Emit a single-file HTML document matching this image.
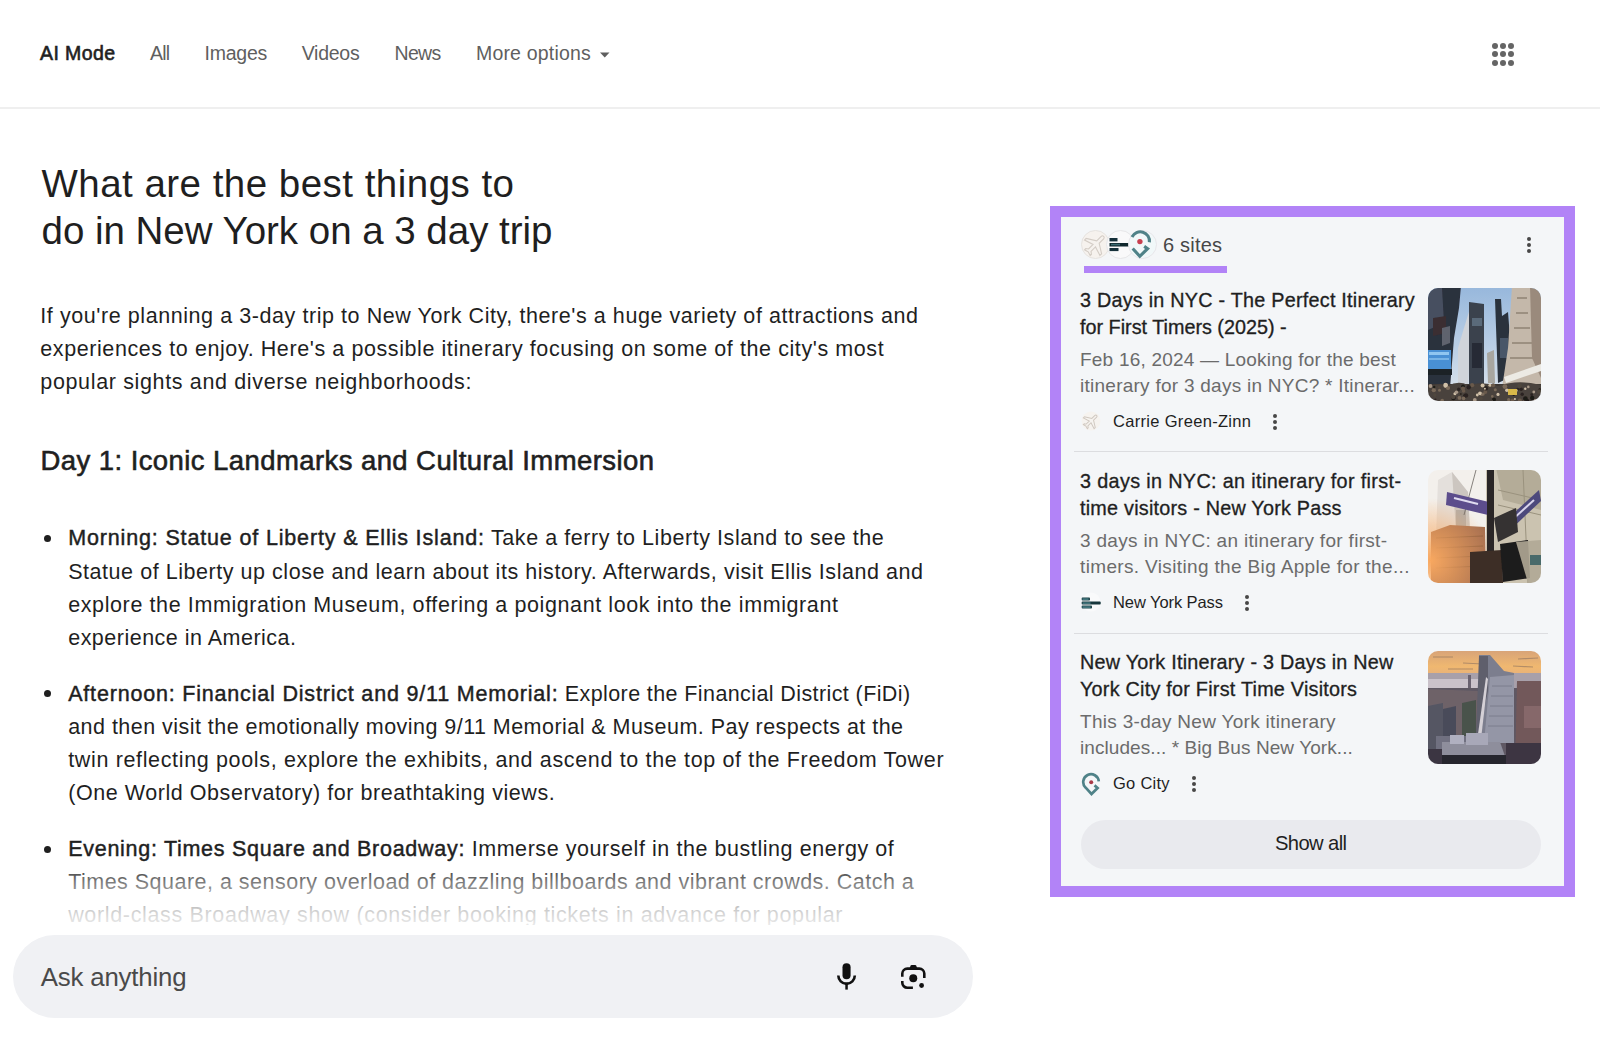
<!DOCTYPE html>
<html><head><meta charset="utf-8">
<style>
html,body{margin:0;padding:0;background:#fff;width:1600px;height:1049px;overflow:hidden;position:relative;font-family:"Liberation Sans",sans-serif;}
.ln{position:absolute;white-space:nowrap;line-height:1;}
.md{font-weight:normal;-webkit-text-stroke:0.45px currentColor;}
.tt .md{-webkit-text-stroke:0.32px currentColor;}
.hd .md{-webkit-text-stroke:0.6px currentColor;}
.abs{position:absolute;}
#sep{left:0;top:106.5px;width:1600px;height:2px;background:#efefef;}
.dot{position:absolute;width:6px;height:6px;border-radius:50%;background:#656565;}
.bul{position:absolute;width:7px;height:7px;border-radius:50%;background:#1f1f1f;}
#panel{box-sizing:border-box;left:1050px;top:205.5px;width:524.8px;height:691px;border:11px solid #b283f7;background:#f4f6f8;}
.div{position:absolute;left:1074px;width:474px;height:1px;background:#dcdde0;}
.thumb{position:absolute;left:1428px;width:113px;height:113px;border-radius:10px;overflow:hidden;z-index:3;}
#show{left:1080.5px;top:819.5px;width:460.5px;height:49px;border-radius:25px;background:#e9eaee;}
#search{z-index:2;left:13px;top:935px;width:960px;height:83px;border-radius:42px;background:#f0f1f4;}
#fade{z-index:1;left:0;top:835px;width:1000px;height:100px;background:linear-gradient(to bottom,rgba(255,255,255,0) 0px,rgba(255,255,255,0) 27px,rgba(255,255,255,0.42) 47px,rgba(255,255,255,0.8) 77px,rgba(255,255,255,0.9) 90px);}
.kb{position:absolute;width:4px;height:4px;border-radius:50%;background:#474747;}
.fav{position:absolute;border-radius:50%;overflow:hidden;}
</style></head><body>
<div class="abs" id="sep"></div>
<!-- grid icon -->
<div class="dot" style="left:1491.5px;top:43px"></div><div class="dot" style="left:1499.5px;top:43px"></div><div class="dot" style="left:1508px;top:43px"></div>
<div class="dot" style="left:1491.5px;top:51px"></div><div class="dot" style="left:1499.5px;top:51px"></div><div class="dot" style="left:1508px;top:51px"></div>
<div class="dot" style="left:1491.5px;top:59.5px"></div><div class="dot" style="left:1499.5px;top:59.5px"></div><div class="dot" style="left:1508px;top:59.5px"></div>
<!-- dropdown arrow -->
<svg class="abs" style="left:599px;top:51px" width="12" height="8"><path d="M1 1.5 L10.5 1.5 L5.75 6.5 Z" fill="#5f5f5f"/></svg>

<!-- bullets -->
<div class="bul" style="left:43.8px;top:534.6px"></div>
<div class="bul" style="left:43.8px;top:690.4px"></div>
<div class="bul" style="left:43.8px;top:846.3px"></div>

<div class="ln hd" id="t_nav0" style="z-index:0;left:40.00px;top:43.69px;font-size:19.50px;color:#1f1f1f;letter-spacing:0.394px"><span class="in"><span class="md" style="letter-spacing:0.394px">AI Mode</span></span></div>
<div class="ln" id="t_nav1" style="z-index:0;left:150.00px;top:43.69px;font-size:19.50px;color:#5f5f5f;letter-spacing:-0.843px"><span class="in">All</span></div>
<div class="ln" id="t_nav2" style="z-index:0;left:204.50px;top:43.69px;font-size:19.50px;color:#5f5f5f;letter-spacing:-0.232px"><span class="in">Images</span></div>
<div class="ln" id="t_nav3" style="z-index:0;left:301.70px;top:43.69px;font-size:19.50px;color:#5f5f5f;letter-spacing:-0.255px"><span class="in">Videos</span></div>
<div class="ln" id="t_nav4" style="z-index:0;left:394.50px;top:43.69px;font-size:19.50px;color:#5f5f5f;letter-spacing:-0.656px"><span class="in">News</span></div>
<div class="ln" id="t_nav5" style="z-index:0;left:476.00px;top:43.69px;font-size:19.50px;color:#5f5f5f;letter-spacing:0.179px"><span class="in">More options</span></div>
<div class="ln" id="t_h1" style="z-index:0;left:41.50px;top:164.91px;font-size:38.50px;color:#1f1f1f;letter-spacing:0.476px"><span class="in">What are the best things to</span></div>
<div class="ln" id="t_h2" style="z-index:0;left:41.50px;top:211.61px;font-size:38.50px;color:#1f1f1f;letter-spacing:-0.018px"><span class="in">do in New York on a 3 day trip</span></div>
<div class="ln" id="t_p0" style="z-index:0;left:40.30px;top:305.60px;font-size:21.50px;color:#1f1f1f;letter-spacing:0.569px"><span class="in">If you're planning a 3-day trip to New York City, there's a huge variety of attractions and</span></div>
<div class="ln" id="t_p1" style="z-index:0;left:40.30px;top:338.90px;font-size:21.50px;color:#1f1f1f;letter-spacing:0.586px"><span class="in">experiences to enjoy. Here's a possible itinerary focusing on some of the city's most</span></div>
<div class="ln" id="t_p2" style="z-index:0;left:40.30px;top:372.20px;font-size:21.50px;color:#1f1f1f;letter-spacing:0.647px"><span class="in">popular sights and diverse neighborhoods:</span></div>
<div class="ln hd" id="t_d1" style="z-index:0;left:40.60px;top:446.92px;font-size:27.50px;color:#1f1f1f;letter-spacing:0.419px"><span class="in"><span class="md" style="letter-spacing:0.419px">Day 1: Iconic Landmarks and Cultural Immersion</span></span></div>
<div class="ln" id="t_m0" style="z-index:0;left:68.20px;top:528.20px;font-size:21.50px;color:#1f1f1f;letter-spacing:0.557px"><span class="in"><span class="md" style="letter-spacing:0.844px">Morning: Statue of Liberty &amp; Ellis Island:</span> Take a ferry to Liberty Island to see the</span></div>
<div class="ln" id="t_m1" style="z-index:0;left:68.20px;top:561.55px;font-size:21.50px;color:#1f1f1f;letter-spacing:0.545px"><span class="in">Statue of Liberty up close and learn about its history. Afterwards, visit Ellis Island and</span></div>
<div class="ln" id="t_m2" style="z-index:0;left:68.20px;top:594.90px;font-size:21.50px;color:#1f1f1f;letter-spacing:0.605px"><span class="in">explore the Immigration Museum, offering a poignant look into the immigrant</span></div>
<div class="ln" id="t_m3" style="z-index:0;left:68.20px;top:628.25px;font-size:21.50px;color:#1f1f1f;letter-spacing:0.490px"><span class="in">experience in America.</span></div>
<div class="ln" id="t_a0" style="z-index:0;left:68.20px;top:684.00px;font-size:21.50px;color:#1f1f1f;letter-spacing:0.399px"><span class="in"><span class="md" style="letter-spacing:0.811px">Afternoon: Financial District and 9/11 Memorial:</span> Explore the Financial District (FiDi)</span></div>
<div class="ln" id="t_a1" style="z-index:0;left:68.20px;top:717.10px;font-size:21.50px;color:#1f1f1f;letter-spacing:0.462px"><span class="in">and then visit the emotionally moving 9/11 Memorial &amp; Museum. Pay respects at the</span></div>
<div class="ln" id="t_a2" style="z-index:0;left:68.20px;top:750.20px;font-size:21.50px;color:#1f1f1f;letter-spacing:0.650px"><span class="in">twin reflecting pools, explore the exhibits, and ascend to the top of the Freedom Tower</span></div>
<div class="ln" id="t_a3" style="z-index:0;left:68.20px;top:783.30px;font-size:21.50px;color:#1f1f1f;letter-spacing:0.558px"><span class="in">(One World Observatory) for breathtaking views.</span></div>
<div class="ln" id="t_e0" style="z-index:0;left:68.20px;top:839.00px;font-size:21.50px;color:#1f1f1f;letter-spacing:0.561px"><span class="in"><span class="md" style="letter-spacing:0.721px">Evening: Times Square and Broadway:</span> Immerse yourself in the bustling energy of</span></div>
<div class="ln" id="t_e1" style="z-index:0;left:68.20px;top:872.10px;font-size:21.50px;color:#1f1f1f;letter-spacing:0.484px"><span class="in">Times Square, a sensory overload of dazzling billboards and vibrant crowds. Catch a</span></div>
<div class="ln" id="t_e2" style="z-index:0;left:68.20px;top:905.20px;font-size:21.50px;color:#1f1f1f;letter-spacing:0.654px"><span class="in">world-class Broadway show (consider booking tickets in advance for popular</span></div>
<div class="ln" id="t_sites" style="z-index:3;left:1163.00px;top:235.27px;font-size:20.00px;color:#474747;letter-spacing:0.197px"><span class="in">6 sites</span></div>
<div class="ln tt" id="t_c0t0" style="z-index:3;left:1080.00px;top:290.84px;font-size:19.80px;color:#1f1f1f;letter-spacing:0.238px"><span class="in"><span class="md" style="letter-spacing:0.238px">3 Days in NYC - The Perfect Itinerary</span></span></div>
<div class="ln tt" id="t_c0t1" style="z-index:3;left:1080.00px;top:317.64px;font-size:19.80px;color:#1f1f1f;letter-spacing:0.000px"><span class="in"><span class="md" style="letter-spacing:0.000px">for First Timers (2025) -</span></span></div>
<div class="ln" id="t_c0s0" style="z-index:3;left:1080.00px;top:350.32px;font-size:19.00px;color:#6b6b6b;letter-spacing:0.216px"><span class="in">Feb 16, 2024 — Looking for the best</span></div>
<div class="ln" id="t_c0s1" style="z-index:3;left:1080.00px;top:376.32px;font-size:19.00px;color:#6b6b6b;letter-spacing:0.256px"><span class="in">itinerary for 3 days in NYC? * Itinerar...</span></div>
<div class="ln" id="t_c0src" style="z-index:3;left:1113.00px;top:413.23px;font-size:16.50px;color:#1f1f1f;letter-spacing:0.315px"><span class="in">Carrie Green-Zinn</span></div>
<div class="ln tt" id="t_c1t0" style="z-index:3;left:1080.00px;top:471.84px;font-size:19.80px;color:#1f1f1f;letter-spacing:0.356px"><span class="in"><span class="md" style="letter-spacing:0.356px">3 days in NYC: an itinerary for first-</span></span></div>
<div class="ln tt" id="t_c1t1" style="z-index:3;left:1080.00px;top:498.64px;font-size:19.80px;color:#1f1f1f;letter-spacing:0.231px"><span class="in"><span class="md" style="letter-spacing:0.231px">time visitors - New York Pass</span></span></div>
<div class="ln" id="t_c1s0" style="z-index:3;left:1080.00px;top:531.32px;font-size:19.00px;color:#6b6b6b;letter-spacing:0.307px"><span class="in">3 days in NYC: an itinerary for first-</span></div>
<div class="ln" id="t_c1s1" style="z-index:3;left:1080.00px;top:557.32px;font-size:19.00px;color:#6b6b6b;letter-spacing:0.352px"><span class="in">timers. Visiting the Big Apple for the...</span></div>
<div class="ln" id="t_c1src" style="z-index:3;left:1113.00px;top:594.23px;font-size:16.50px;color:#1f1f1f;letter-spacing:-0.081px"><span class="in">New York Pass</span></div>
<div class="ln tt" id="t_c2t0" style="z-index:3;left:1080.00px;top:652.84px;font-size:19.80px;color:#1f1f1f;letter-spacing:0.235px"><span class="in"><span class="md" style="letter-spacing:0.235px">New York Itinerary - 3 Days in New</span></span></div>
<div class="ln tt" id="t_c2t1" style="z-index:3;left:1080.00px;top:679.64px;font-size:19.80px;color:#1f1f1f;letter-spacing:0.241px"><span class="in"><span class="md" style="letter-spacing:0.241px">York City for First Time Visitors</span></span></div>
<div class="ln" id="t_c2s0" style="z-index:3;left:1080.00px;top:712.32px;font-size:19.00px;color:#6b6b6b;letter-spacing:0.303px"><span class="in">This 3-day New York itinerary</span></div>
<div class="ln" id="t_c2s1" style="z-index:3;left:1080.00px;top:738.32px;font-size:19.00px;color:#6b6b6b;letter-spacing:0.076px"><span class="in">includes... * Big Bus New York...</span></div>
<div class="ln" id="t_c2src" style="z-index:3;left:1113.00px;top:775.23px;font-size:16.50px;color:#1f1f1f;letter-spacing:0.264px"><span class="in">Go City</span></div>
<div class="ln" id="t_show" style="z-index:3;left:1275.00px;top:832.90px;font-size:20.20px;color:#1f1f1f;letter-spacing:-0.617px"><span class="in">Show all</span></div>
<div class="ln" id="t_ask" style="z-index:3;left:40.80px;top:964.66px;font-size:25.80px;color:#4a4a4a;letter-spacing:-0.174px"><span class="in">Ask anything</span></div>

<div class="abs" id="fade"></div>
<div class="abs" style="z-index:1;left:0;top:925px;width:1000px;height:11px;background:#fff"></div>

<!-- panel -->
<div class="abs" id="panel"></div>
<div class="abs" style="left:1084px;top:265.5px;width:142.5px;height:7px;background:#b283f7;"></div>
<!-- favicons -->
<svg class="abs" style="left:1078px;top:228px;z-index:3" width="84" height="34" viewBox="0 0 84 34">
 <circle cx="17.5" cy="16.5" r="14" fill="#f6f2ee" stroke="#e6e3e0" stroke-width="1"/>
 <path transform="translate(17.5 16.5) rotate(45) scale(1.15) translate(-11.5 -12)" d="M21 16v-2l-8-5V3.5c0-.83-.67-1.5-1.5-1.5S10 2.67 10 3.5V9l-8 5v2l8-2.5V19l-2 1.5V22l3.5-1 3.5 1v-1.5L13 19v-5.5l8 2.5z" fill="none" stroke="#d3ccc5" stroke-width="0.95"/>
 <circle cx="42.5" cy="16.5" r="14" fill="#f9f9fa" stroke="#e6e6e8" stroke-width="1"/>
 <rect x="31.5" y="10" width="8" height="3.4" fill="#15303a"/>
 <rect x="31.5" y="15" width="19.8" height="3.5" fill="#0f262c"/>
 <rect x="33" y="15.8" width="9" height="1.6" fill="#3a6a72"/>
 <rect x="31.5" y="20" width="9" height="3.1" fill="#15303a"/>
 <circle cx="64.5" cy="16.5" r="14" fill="#f1f8f9" stroke="#e8e6ea" stroke-width="1"/>
 <path d="M54 9 A9.2 9.2 0 0 1 71.4 14.2" fill="none" stroke="#4f8288" stroke-width="3.1"/>
 <path d="M54.7 20.5 L61.8 28.3 L69.6 20.7 L66.2 18.4" fill="none" stroke="#4f8288" stroke-width="3.1"/>
 <circle cx="61.9" cy="13.6" r="2.7" fill="#c8404f"/>
</svg>
<div class="kb" style="left:1526.5px;top:236.5px"></div><div class="kb" style="left:1526.5px;top:242.5px"></div><div class="kb" style="left:1526.5px;top:248.5px"></div>

<div class="div" style="top:451px"></div>
<div class="div" style="top:632.5px"></div>

<svg class="thumb" style="top:287.5px" width="113" height="113" viewBox="0 0 113 113">
 <defs><linearGradient id="sky1" x1="0" y1="0" x2="0" y2="1"><stop offset="0" stop-color="#98b8dc"/><stop offset="0.55" stop-color="#bcd0e6"/><stop offset="1" stop-color="#e0e6ec"/></linearGradient>
 <filter id="bl1"><feGaussianBlur stdDeviation="0.7"/></filter></defs>
 <rect width="113" height="113" fill="url(#sky1)"/>
 <g filter="url(#bl1)">
 <path d="M30 60 L36 40 L44 14 L40 100 L30 100Z" fill="#d0d4da"/>
 <path d="M0 -2 L33 -2 L31 20 L26 50 L24 75 L22 100 L0 100 Z" fill="#2c303c"/>
 <path d="M0 0 L14 0 L16 35 L0 42 Z" fill="#474f60"/>
 <path d="M5 30 L18 28 L18 45 L5 48Z" fill="#3a2e32"/>
 <path d="M14 40 L22 38 L22 55 L14 58Z" fill="#5e646e"/>
 <rect x="0" y="62" width="23" height="19" fill="#4a90d4"/>
 <rect x="1" y="64" width="20" height="3" fill="#90c6f0"/>
 <rect x="1" y="70" width="20" height="2" fill="#78b4e6"/>
 <rect x="0" y="81" width="24" height="6" fill="#1e2028"/>
 <path d="M41 14 L56 16 L56 100 L41 100 Z" fill="#3a424e"/>
 <rect x="44" y="30" width="10" height="8" fill="#5a6a7a"/>
 <rect x="44" y="55" width="10" height="25" fill="#262c36"/>
 <path d="M67 11 L73 11 L74 28 L80 24 L85 88 L70 95 Z" fill="#2c333e"/>
 <rect x="72" y="50" width="8" height="20" fill="#485668"/>
 <path d="M59 65 L66 62 L67 95 L60 95Z" fill="#a8a6a0"/>
 <path d="M84 -2 L113 -2 L113 100 L74 100 L80 60 Z" fill="#c4b8aa"/>
 <path d="M89 10 L99 10 M88 25 L100 25 M86 40 L102 40 M84 55 L104 55 M82 70 L106 70" stroke="#8e8274" stroke-width="1.5"/>
 <path d="M102 -2 L113 -2 L113 90 L104 70 Z" fill="#9a8a7c"/>
 <path d="M76 89 L113 76 L113 83 L78 95 Z" fill="#eceae4"/>
 <rect x="0" y="96" width="113" height="17" fill="#3e3834"/>
 <path d="M0 99 Q10 94 20 98 Q30 92 40 97 Q55 93 70 98 Q90 91 113 97 L113 113 L0 113Z" fill="#4a423c"/>
 <circle cx="26.9" cy="105.7" r="1.5" fill="#d0c0a8"/><circle cx="53.6" cy="106.3" r="1.8" fill="#7a6a5a"/><circle cx="53.0" cy="105.8" r="1.3" fill="#50463e"/><circle cx="53.1" cy="110.4" r="1.7" fill="#50463e"/><circle cx="97.3" cy="100.7" r="1.2" fill="#d0c0a8"/><circle cx="44.1" cy="97.2" r="2.1" fill="#6a5a4c"/><circle cx="85.7" cy="106.5" r="1.4" fill="#1e1a18"/><circle cx="93.1" cy="101.3" r="1.8" fill="#2a2420"/><circle cx="80.7" cy="111.7" r="1.6" fill="#7a6a5a"/><circle cx="65.2" cy="112.4" r="1.2" fill="#a89888"/><circle cx="11.0" cy="99.2" r="1.3" fill="#50463e"/><circle cx="49.3" cy="107.0" r="1.4" fill="#d0c0a8"/><circle cx="94.2" cy="106.2" r="1.7" fill="#2a2420"/><circle cx="66.0" cy="111.5" r="2.0" fill="#1e1a18"/><circle cx="96.8" cy="112.9" r="1.9" fill="#6a5a4c"/><circle cx="78.9" cy="102.2" r="1.8" fill="#d0c0a8"/><circle cx="64.3" cy="108.4" r="1.3" fill="#7a6a5a"/><circle cx="111.7" cy="101.3" r="1.2" fill="#2a2420"/><circle cx="96.5" cy="112.8" r="1.1" fill="#7a6a5a"/><circle cx="7.5" cy="111.4" r="1.0" fill="#2a2420"/><circle cx="86.9" cy="111.0" r="1.1" fill="#d0c0a8"/><circle cx="86.1" cy="103.0" r="1.8" fill="#d0c0a8"/><circle cx="99.5" cy="112.7" r="1.7" fill="#1e1a18"/><circle cx="35.0" cy="98.2" r="1.8" fill="#1e1a18"/><circle cx="107.2" cy="112.5" r="1.4" fill="#a89888"/><circle cx="17.7" cy="97.7" r="2.2" fill="#a89888"/><circle cx="40.7" cy="99.2" r="2.2" fill="#2a2420"/><circle cx="52.0" cy="105.3" r="1.9" fill="#d0c0a8"/><circle cx="76.9" cy="98.6" r="2.4" fill="#7a6a5a"/><circle cx="57.3" cy="103.9" r="2.0" fill="#6a5a4c"/><circle cx="105.8" cy="104.0" r="1.4" fill="#a89888"/><circle cx="62.0" cy="97.2" r="1.6" fill="#d0c0a8"/><circle cx="35.6" cy="103.0" r="1.8" fill="#6a5a4c"/><circle cx="6.8" cy="107.0" r="1.7" fill="#50463e"/><circle cx="103.7" cy="106.7" r="1.4" fill="#2a2420"/><circle cx="2.5" cy="98.0" r="1.9" fill="#a89888"/><circle cx="28.4" cy="104.3" r="1.8" fill="#a89888"/><circle cx="20.0" cy="100.0" r="2.1" fill="#7a6a5a"/><circle cx="67.3" cy="101.8" r="1.5" fill="#7a6a5a"/><circle cx="91.9" cy="112.5" r="2.0" fill="#6a5a4c"/><circle cx="35.0" cy="100.6" r="2.1" fill="#6a5a4c"/><circle cx="37.0" cy="107.8" r="1.9" fill="#1e1a18"/><circle cx="11.5" cy="102.2" r="1.5" fill="#7a6a5a"/><circle cx="25.4" cy="110.0" r="2.3" fill="#1e1a18"/><circle cx="38.0" cy="107.4" r="2.2" fill="#2a2420"/><circle cx="30.6" cy="109.6" r="1.0" fill="#6a5a4c"/><circle cx="35.6" cy="110.4" r="1.8" fill="#7a6a5a"/><circle cx="31.5" cy="109.9" r="1.9" fill="#7a6a5a"/><circle cx="70.0" cy="106.4" r="1.6" fill="#d0c0a8"/><circle cx="89.7" cy="101.3" r="1.5" fill="#2a2420"/><circle cx="32.8" cy="106.1" r="1.0" fill="#2a2420"/><circle cx="17.6" cy="97.1" r="2.3" fill="#d0c0a8"/><circle cx="111.5" cy="103.9" r="2.3" fill="#50463e"/><circle cx="25.1" cy="108.9" r="2.2" fill="#50463e"/><circle cx="84.5" cy="112.4" r="1.8" fill="#6a5a4c"/><circle cx="97.4" cy="110.7" r="2.4" fill="#1e1a18"/><circle cx="91.6" cy="97.7" r="2.3" fill="#50463e"/><circle cx="57.9" cy="100.2" r="2.2" fill="#2a2420"/><circle cx="65.2" cy="97.2" r="2.0" fill="#6a5a4c"/><circle cx="56.9" cy="100.8" r="1.0" fill="#d0c0a8"/><circle cx="46.8" cy="112.0" r="1.9" fill="#a89888"/><circle cx="14.2" cy="112.6" r="1.8" fill="#7a6a5a"/><circle cx="88.4" cy="102.6" r="1.3" fill="#d0c0a8"/><circle cx="100.3" cy="98.9" r="1.3" fill="#a89888"/><circle cx="104.2" cy="109.9" r="2.2" fill="#1e1a18"/><circle cx="55.1" cy="106.1" r="1.6" fill="#7a6a5a"/><circle cx="30.7" cy="101.3" r="1.7" fill="#2a2420"/><circle cx="5.8" cy="102.2" r="2.1" fill="#7a6a5a"/><circle cx="6.2" cy="99.0" r="1.2" fill="#1e1a18"/><circle cx="54.6" cy="97.5" r="2.0" fill="#d0c0a8"/>
 <rect x="80" y="101" width="9" height="6" fill="#d8b848"/>
 </g>
</svg>
<svg class="thumb" style="top:469.5px" width="113" height="113" viewBox="0 0 113 113">
 <defs><radialGradient id="glow2" cx="0.02" cy="0.8" r="0.55"><stop offset="0" stop-color="#f8a860"/><stop offset="1" stop-color="#f8a860" stop-opacity="0"/></radialGradient>
 <filter id="bl2"><feGaussianBlur stdDeviation="0.5"/></filter></defs>
 <rect width="113" height="113" fill="#f3f0ec"/>
 <g filter="url(#bl2)">
 <path d="M10 10 L24 2 L40 22 L42 62 L8 66 Z" fill="#e4e0dc"/>
 <path d="M24 2 L40 22 L42 62 L28 62Z" fill="#ccc6c0"/>
 <path d="M28 40 L38 40 L38 58 L28 58Z" fill="#b4ada6"/>
 <path d="M48 0 L36 45" stroke="#6a6460" stroke-width="0.8"/>
 <path d="M58 -2 L113 -2 L113 113 L58 113 Z" fill="#cbc3b0"/>
 <path d="M68 -2 L113 -2 L113 40 L75 30 Z" fill="#b4ac98"/>
 <path d="M70 20 L113 30 M70 35 L113 45 M95 0 L100 113" stroke="#9a927e" stroke-width="1"/>
 <path d="M3 62 L22 55 L57 57 L58 113 L3 113Z" fill="#a87050"/>
 <path d="M8 68 L55 66 M8 78 L55 76 M8 88 L55 86 M8 98 L55 96" stroke="#8e5e40" stroke-width="1"/>
 <rect width="113" height="113" fill="url(#glow2)"/>
 <path d="M19 22 L61 32 L60 45 L18 35 Z" fill="#5c4e8c"/>
 <path d="M26 28 L50 34" stroke="#e0dcf0" stroke-width="2.2"/>
 <path d="M76 52 L111 20 L113 31 L80 62 Z" fill="#4e4a7c"/>
 <path d="M84 50 L106 30" stroke="#d8d4ec" stroke-width="2"/>
 <rect x="59" y="-2" width="7" height="115" fill="#2a2826"/>
 <path d="M66 48 L88 38 L90 62 L70 72 Z" fill="#343030"/>
 <path d="M42 82 L74 80 L75 113 L42 113 Z" fill="#3c2e26"/>
 <path d="M72 74 L100 70 L102 108 L75 112 Z" fill="#1e1c1c"/>
 <path d="M88 72 L113 70 L113 113 L100 113Z" fill="#b0a896" opacity="0.9"/>
 <rect x="102" y="85" width="11" height="10" fill="#4a6a6a"/>
 </g>
</svg>
<svg class="thumb" style="top:650.7px" width="113" height="113" viewBox="0 0 113 113">
 <defs><linearGradient id="sky3" x1="0" y1="0" x2="0" y2="1"><stop offset="0" stop-color="#d8a478"/><stop offset="0.6" stop-color="#f0b870"/><stop offset="1" stop-color="#e6b07c"/></linearGradient>
 <filter id="bl3"><feGaussianBlur stdDeviation="0.7"/></filter></defs>
 <rect width="113" height="26" fill="url(#sky3)"/>
 <g filter="url(#bl3)">
 <path d="M5 6 L25 6 M35 12 L55 13 M90 8 L110 7 M20 18 L45 18 M85 15 L105 16" stroke="#8a7060" stroke-width="1.2" opacity="0.6"/>
 <rect y="22" width="113" height="16" fill="#a8a0aa"/>
 <rect y="28" width="52" height="9" fill="#cac2ca"/>
 <rect x="40" y="24" width="3" height="14" fill="#6a6270"/>
 <rect y="37" width="113" height="76" fill="#5e5864"/>
 <path d="M0 38 L50 40 L50 113 L0 113Z" fill="#6e6268"/>
 <path d="M0 55 L15 52 L15 113 L0 113Z" fill="#545664"/>
 <path d="M15 58 L28 55 L28 113 L15 113Z" fill="#4a4c5a"/>
 <path d="M34 52 L48 49 L48 98 L34 98Z" fill="#4a524c"/>
 <path d="M8 85 L40 85 L40 100 L8 100Z" fill="#707080"/>
 <path d="M51 4 L62 4 L76 20 L86 22 L86 92 L52 92 Z" fill="#7c7e8e"/>
 <path d="M62 26 L86 24 L86 92 L56 92 Z" fill="#9496a6"/>
 <path d="M64 35 L84 35 M63 45 L85 45 M62 55 L85 55 M61 65 L85 65 M60 75 L85 75" stroke="#787a8a" stroke-width="0.9"/>
 <path d="M51 5 L60 5 L60 40 L50 85 L48 85 Z" fill="#5e5e6c"/>
 <path d="M60 28 L53 88 L49 90 L58 26Z" fill="#d4d0d6"/>
 <path d="M89 30 L113 30 L113 113 L87 113Z" fill="#72585a"/>
 <rect x="96" y="55" width="17" height="22" fill="#86686a"/>
 <path d="M14 91 L72 91 L78 108 L14 108Z" fill="#8e8e9c"/>
 <rect x="22" y="84" width="14" height="9" fill="#b0b0c0"/>
 <rect x="38" y="82" width="22" height="12" fill="#a8a8b8"/>
 <rect x="14" y="104" width="70" height="9" fill="#26262e"/>
 <rect x="0" y="98" width="14" height="15" fill="#3a3642"/>
 <rect x="78" y="92" width="35" height="21" fill="#3e3642"/>
 </g>
</svg>
<div class="kb" style="left:1273px;top:413.5px"></div><div class="kb" style="left:1273px;top:419.5px"></div><div class="kb" style="left:1273px;top:425.5px"></div>
<div class="kb" style="left:1245px;top:594.5px"></div><div class="kb" style="left:1245px;top:600.5px"></div><div class="kb" style="left:1245px;top:606.5px"></div>
<div class="kb" style="left:1192px;top:775.5px"></div><div class="kb" style="left:1192px;top:781.5px"></div><div class="kb" style="left:1192px;top:787.5px"></div>

<svg class="abs" style="left:1081px;top:411px;z-index:3" width="20" height="20" viewBox="0 0 20 20">
 <circle cx="10" cy="10" r="9.5" fill="#f6f3ef"/>
 <path transform="translate(10 10) rotate(45) scale(0.8) translate(-11.5 -12)" d="M21 16v-2l-8-5V3.5c0-.83-.67-1.5-1.5-1.5S10 2.67 10 3.5V9l-8 5v2l8-2.5V19l-2 1.5V22l3.5-1 3.5 1v-1.5L13 19v-5.5l8 2.5z" fill="none" stroke="#cfc7bf" stroke-width="1.2"/>
</svg>
<svg class="abs" style="left:1080px;top:592px;z-index:3" width="22" height="20" viewBox="0 0 22 20">
 <circle cx="11" cy="10" r="9.5" fill="#f9fafb"/>
 <rect x="1.7" y="5.6" width="8.3" height="3" rx="0.8" fill="#1d4248"/>
 <rect x="1.7" y="9.6" width="19" height="3" rx="0.8" fill="#16363c"/>
 <rect x="2.5" y="10.4" width="8" height="1.4" fill="#4a8088"/>
 <rect x="1.7" y="13.6" width="10.3" height="3" rx="0.8" fill="#1d4248"/>
 <rect x="2.5" y="6.4" width="6" height="1.4" fill="#4a8088"/>
 <rect x="2.5" y="14.4" width="8" height="1.4" fill="#4a8088"/>
</svg>
<svg class="abs" style="left:1080px;top:772px;z-index:3" width="22" height="25" viewBox="0 0 22 25">
 <path d="M18.8 9.3 A7.8 7.8 0 1 0 5.7 15.7 L11.5 22 L17.6 16 L14.5 13.4" fill="none" stroke="#4f8288" stroke-width="2.7"/>
 <circle cx="11.2" cy="10.2" r="2" fill="#a83a48"/>
</svg>
<div class="abs" id="show"></div>
<div class="abs" id="search"></div>
<!-- mic -->
<svg class="abs" style="left:830px;top:958px;z-index:3" width="34" height="34" viewBox="830 958 34 34">
 <rect x="842.5" y="963.2" width="8.1" height="16" rx="4.05" fill="#111"/>
 <path d="M838.3 975.6 A8.25 8.25 0 0 0 854.8 975.6" fill="none" stroke="#111" stroke-width="2.6"/>
 <rect x="845.3" y="982.5" width="2.5" height="7.1" fill="#111"/>
</svg>
<svg class="abs" style="left:896px;top:960px;z-index:3" width="34" height="34" viewBox="896 960 34 34">
 <path d="M902.3 976.7 V973.6 A5 5 0 0 1 907.3 968.6 H919.3 A5 5 0 0 1 924.3 973.6 V978" fill="none" stroke="#111" stroke-width="2.6"/>
 <path d="M902.3 981 V982.7 A5 5 0 0 0 907.3 987.7 H912.9" fill="none" stroke="#111" stroke-width="2.6"/>
 <path d="M909.3 969 L910.6 965.6 Q910.9 964.9 911.6 964.9 H915.2 Q915.9 964.9 916.2 965.6 L917.5 969 Z" fill="#111"/>
 <circle cx="913.25" cy="978.2" r="4" fill="#111"/>
 <circle cx="921.6" cy="985.5" r="2.4" fill="#111"/>
</svg>
</body></html>
